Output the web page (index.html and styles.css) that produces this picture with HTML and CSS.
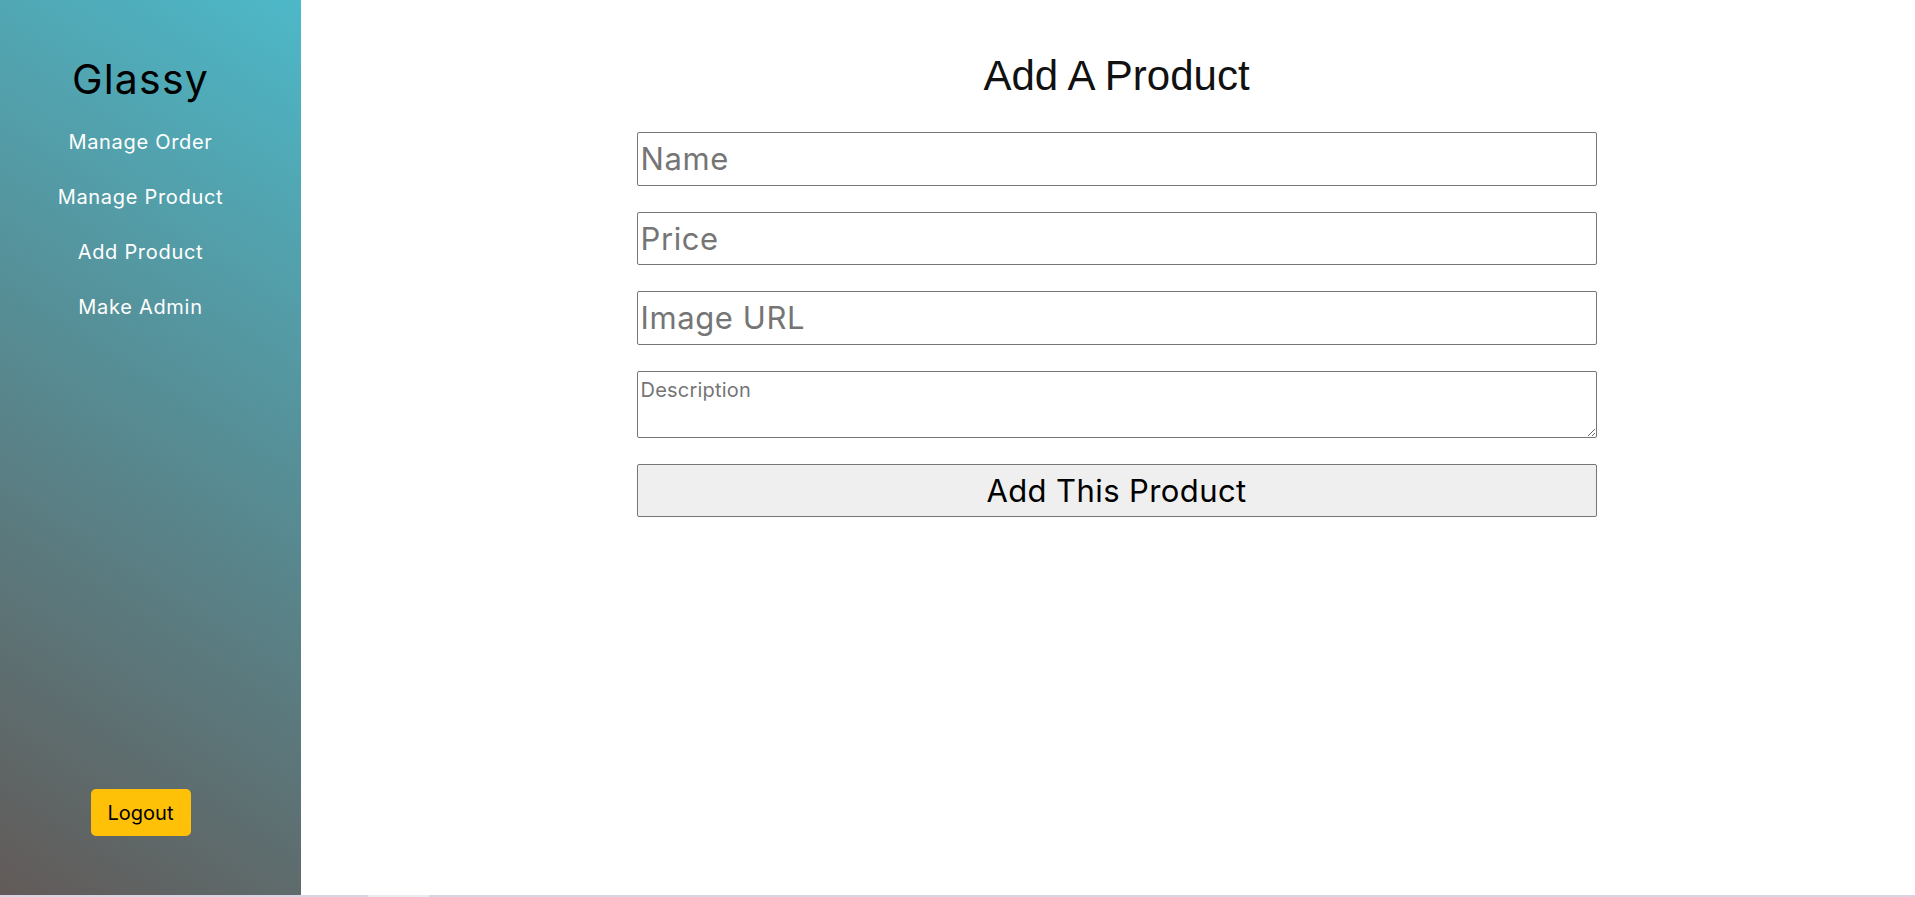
FILE: index.html
```html
<!DOCTYPE html>
<html lang="en">
<head>
<meta charset="utf-8">
<title>Glassy - Add Product</title>
<link rel="stylesheet" href="styles.css">
</head>
<body>
<div class="layout">
  <aside class="sidebar">
    <h1 class="brand">Glassy</h1>
    <nav class="nav">
      <a class="nav-link" href="#">Manage Order</a>
      <a class="nav-link" href="#">Manage Product</a>
      <a class="nav-link" href="#">Add Product</a>
      <a class="nav-link" href="#">Make Admin</a>
    </nav>
    <button class="logout" type="button">Logout</button>
  </aside>
  <main class="main">
    <h2 class="title">Add A Product</h2>
    <form class="form">
      <input class="field" type="text" placeholder="Name">
      <input class="field" type="text" placeholder="Price">
      <input class="field" type="text" placeholder="Image URL">
      <textarea class="area" placeholder="Description"></textarea>
      <button class="submit" type="button">Add This Product</button>
    </form>
  </main>
</div>
<div class="strip"><div class="thumb"></div></div>
</body>
</html>
```

FILE: styles.css
```css
* { box-sizing: border-box; }
html, body { margin: 0; padding: 0; }
body {
  font-family: Inter, "Noto Sans", sans-serif;
  background: #fff;
  overflow: hidden;
}
.layout {
  display: flex;
  height: 895px;
}
.sidebar {
  width: 301px;
  flex: 0 0 301px;
  display: flex;
  flex-direction: column;
  align-items: center;
  padding: 55px 20px 59px 0;
  background: linear-gradient(33deg, #625a58 0%, #4db8c8 100%);
}
.brand {
  margin: 0;
  font-size: 41px;
  line-height: 48px;
  font-weight: 400;
  color: #000;
  letter-spacing: 1.2px;
}
.nav {
  display: flex;
  flex-direction: column;
  align-items: center;
  gap: 31px;
  margin-top: 27px;
}
.nav-link {
  font-size: 20px;
  line-height: 24px;
  color: #fff;
  text-decoration: none;
  letter-spacing: 0.7px;
}
.logout {
  margin-top: auto;
  width: 100px;
  height: 47px;
  border: none;
  border-radius: 5px;
  background: #ffc107;
  color: #000;
  font-family: Inter, sans-serif;
  font-size: 20px;
  padding: 0;
}
.main {
  flex: 1;
  display: flex;
  flex-direction: column;
  align-items: center;
  padding: 52px 0 0 17px;
}
.title {
  margin: 0;
  font-family: "Liberation Sans", Arial, sans-serif;
  font-size: 42px;
  line-height: 48px;
  font-weight: 400;
  color: #111;
}
.form {
  width: 960px;
  margin-top: 32px;
  display: flex;
  flex-direction: column;
  gap: 26px;
}
.field {
  height: 53.5px;
  width: 100%;
  border: 1px solid #767676;
  border-radius: 2px;
  padding: 0 3px;
  font-family: Inter, sans-serif;
  font-size: 31px;
  letter-spacing: 0.6px;
  color: #000;
}
.field::placeholder { color: #757575; }
.area {
  height: 67px;
  width: 100%;
  border: 1px solid #767676;
  border-radius: 2px;
  padding: 6px 3px;
  font-family: Inter, sans-serif;
  font-size: 20px;
  letter-spacing: 0.2px;
  resize: vertical;
}
.area::placeholder { color: #757575; }
.submit {
  height: 53.5px;
  width: 100%;
  border: 1px solid #767676;
  border-radius: 2px;
  background: #efefef;
  color: #000;
  font-family: Inter, sans-serif;
  font-size: 31px;
  letter-spacing: 0.4px;
  padding: 0;
}
.strip {
  height: 2px;
  background: #d9d3e3;
  display: flex;
}
.thumb {
  margin-left: 368px;
  width: 61px;
  background: #ece9f0;
}
```
